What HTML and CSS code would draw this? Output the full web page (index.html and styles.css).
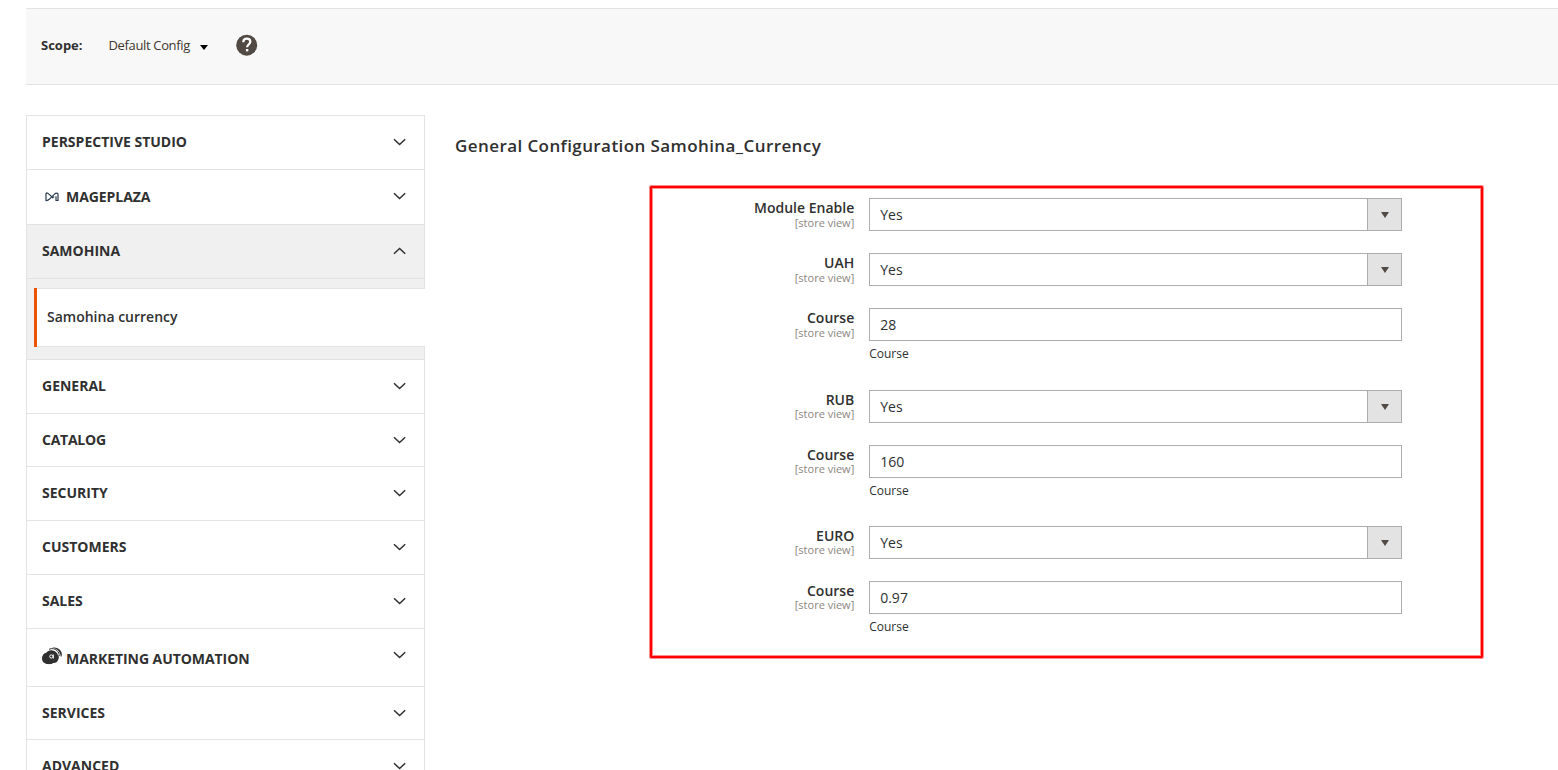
FILE: index.html
```html
<!DOCTYPE html>
<html lang="en">
<head>
<meta charset="utf-8">
<title>Configuration</title>
<link rel="stylesheet" href="styles.css">
</head>
<body>
<svg class="defs" width="0" height="0">
  <symbol id="down" viewBox="0 0 14 8"><path d="M1 1.200 6.600 6.500l5.600-5.300" fill="none" stroke="#303030" stroke-width="1.500"/></symbol>
</svg>
<header class="scope">
  <span class="scope-label">Scope:</span>
  <span class="scope-value">Default Config</span>
  <svg class="scope-caret" width="8" height="5" viewBox="0 0 8 5"><path d="M0 0h8L4 5z"/></svg>
  <svg class="help" width="22" height="22" viewBox="0 0 22 22"><circle cx="10.700" cy="11.200" r="10.500" fill="#514943"/><path d="M7.300 8.200c0-2.200 1.500-3.500 3.500-3.500s3.500 1.200 3.500 3.100c0 2.500-3.200 2.900-3.200 5.500" fill="none" stroke="#fff" stroke-width="2.200"/><path d="M9.900 15h2.400v2.400H9.900z" fill="#fff"/></svg>
</header>
<div class="columns">
  <nav class="nav">
    <div class="tab"><span>PERSPECTIVE STUDIO</span><svg class="chev"><use href="#down"/></svg></div>
    <div class="tab mageplaza"><svg class="mp-icon" width="14" height="10" viewBox="0 0 14 10"><path d="M1 1v7.500c1.400.4 2.600-.6 3.800-1.700L9.300 2.300c1.400-1.400 3.700-1.600 3.700.2v6h-2V4.200M1 1c1.200-.2 2.200.4 3.200 1.400l3.500 3.400 1.500-1.200" fill="none" stroke="#2c3a50" stroke-width="1.200"/></svg><span>MAGEPLAZA</span><svg class="chev"><use href="#down"/></svg></div>
    <div class="tab open"><span>SAMOHINA</span><svg class="chev"><use href="#down"/></svg></div>
    <div class="sub"><div class="sub-item">Samohina currency</div></div>
    <div class="tab"><span>GENERAL</span><svg class="chev"><use href="#down"/></svg></div>
    <div class="tab short catalog"><span>CATALOG</span><svg class="chev"><use href="#down"/></svg></div>
    <div class="tab"><span>SECURITY</span><svg class="chev"><use href="#down"/></svg></div>
    <div class="tab"><span>CUSTOMERS</span><svg class="chev"><use href="#down"/></svg></div>
    <div class="tab"><span>SALES</span><svg class="chev"><use href="#down"/></svg></div>
    <div class="tab marketing"><svg class="ma-icon" width="21" height="18" viewBox="0 0 21 18"><path d="M0 11.500C0 8 2 6.200 4.300 5.800 5.500 3.800 8 3 10.500 3.400c3 .4 4.600 2.300 5.300 4.300 1 .9 1.300 2.500.8 4-.8 2.800-3 4.700-5.300 4.300-1.300 1.100-3.500 1.300-5.500 1.100C2.500 16.800 0 15 0 11.500z" fill="#303030"/><path d="M7 2.300C10 .9 13 1.700 15 3.600c1.700 1.600 2.300 3.300 2.200 5.400" fill="none" stroke="#303030" stroke-width="1"/><path d="M10 .8c3.500-1 6.300.3 8 2.300 2 2.300 2.500 4.900.9 7.200-.2-3.600-2-7.300-5.500-8.600C12.300 1.200 11 .9 10 .8z" fill="#303030"/><circle cx="9.300" cy="9.500" r="1.600" fill="none" stroke="#fff"/><path d="M11.300 7.500v4" stroke="#fff"/></svg><span>MARKETING AUTOMATION</span><svg class="chev"><use href="#down"/></svg></div>
    <div class="tab short"><span>SERVICES</span><svg class="chev"><use href="#down"/></svg></div>
    <div class="tab"><span>ADVANCED</span><svg class="chev"><use href="#down"/></svg></div>
  </nav>
  <main class="content">
    <h1 class="title">General Configuration Samohina_Currency</h1>
    <div class="form">
      <div class="field"><div class="label">Module Enable<small>[store view]</small></div><div class="control select"><span>Yes</span><i class="arrow"></i></div></div>
      <div class="field"><div class="label">UAH<small>[store view]</small></div><div class="control select"><span>Yes</span><i class="arrow"></i></div></div>
      <div class="field noted"><div class="label">Course<small>[store view]</small></div><div><div class="control">28</div><p class="note">Course</p></div></div>
      <div class="field close"><div class="label">RUB<small>[store view]</small></div><div class="control select"><span>Yes</span><i class="arrow"></i></div></div>
      <div class="field noted tight close"><div class="label">Course<small>[store view]</small></div><div><div class="control">160</div><p class="note">Course</p></div></div>
      <div class="field close"><div class="label">EURO<small>[store view]</small></div><div class="control select"><span>Yes</span><i class="arrow"></i></div></div>
      <div class="field noted close"><div class="label">Course<small>[store view]</small></div><div><div class="control">0.97</div><p class="note">Course</p></div></div>
    </div>
  </main>
</div>
</body>
</html>
```
FILE: styles.css
```css
* { box-sizing: border-box; }
body { margin: 0; height: 770px; overflow: hidden; background: #fff; color: #303030; font: 14px/19px "Open Sans", sans-serif; }
.defs { display: block; height: 0; }
.scope { display: flex; align-items: center; height: 77px; margin: 8px 0 0 26px; padding: 0 0 2px 15px; background: #f8f8f8; border: solid #e3e3e3; border-width: 1px 0; font-size: 13px; }
.scope-label { width: 67.500px; font-weight: 700; font-size: 13px; }
.scope-value { width: 91.500px; color: #41362f; letter-spacing: -.35px; }
.scope-caret { margin-top: 4px; }
.help { margin: 0 0 1px 28px; }
.columns { display: flex; margin: 30px 0 0 26px; }
.nav { width: 399px; border: 1px solid #e3e3e3; }
.tab { display: flex; align-items: center; height: 54px; padding: 0 17px 1px 15px; border-bottom: 1px solid #e3e3e3; font-weight: 700; }
.tab span { padding-bottom: 1px; }
.short { height: 53px; }
.catalog span { letter-spacing: -.25px; }
.mageplaza { height: 55px; padding-left: 18px; }
.mageplaza span { letter-spacing: -.06px; }
.mageplaza .chev { margin-bottom: 1px; }
.marketing { height: 58px; padding-bottom: 2px; }
.marketing span { padding: 4px 0 0; letter-spacing: -.06px; }
.marketing .chev { margin-bottom: 4px; }
.open { background: #f0f0f0; }
.open .chev { transform: scaleY(-1); }
.chev { width: 14px; height: 8px; margin-left: auto; }
.mp-icon { margin-right: 7px; }
.ma-icon { margin: 0 3px 1px 0; }
.sub { height: 81px; padding: 9px 0 12px 7px; background: #f0f0f0; border-bottom: 1px solid #e3e3e3; }
.sub-item { height: 59px; margin-right: -1px; padding: 0 0 1px 10px; line-height: 58px; background: linear-gradient(#e3e3e3, #e3e3e3) top / 100% 1px no-repeat, linear-gradient(#e3e3e3, #e3e3e3) bottom / 100% 1px no-repeat, #fff; border-left: 3px solid #eb5202; font-weight: 600; }
.content { margin-left: 30px; padding-top: 19px; }
.title { margin: 0; font-size: 17px; line-height: 24px; font-weight: 600; letter-spacing: .415px; }
.form { width: 833px; height: 472px; margin: 28px 0 0 195px; padding-top: 10px; border: 2px solid #f00; border-radius: 1px; box-shadow: 0 0 0 1px #ff8c8c, inset 0 0 0 1px #ff8c8c; }
.field { display: flex; height: 55px; }
.noted { height: 82px; }
.tight { height: 81px; }
.label { width: 202.250px; margin-right: 14.750px; text-align: right; font-weight: 600; }
.label small { display: block; margin-top: -1px; font-size: 11px; line-height: 13px; font-weight: 400; color: #8c8680; }
.close small { margin-top: -2px; }
.control { width: 533px; height: 33px; padding-left: 10.200px; border: 1px solid #adadad; line-height: 32px; }
.select { display: flex; justify-content: space-between; }
.arrow { display: grid; place-items: center; width: 34px; padding-left: 1px; border-left: 1px solid #adadad; background: #e3e3e3; }
.arrow::before { content: ""; border: 4px solid transparent; border-top: 6px solid #514943; border-bottom: 0; }
.note { margin: 4px 0 0 .2px; font-size: 12px; line-height: 17px; }
```
